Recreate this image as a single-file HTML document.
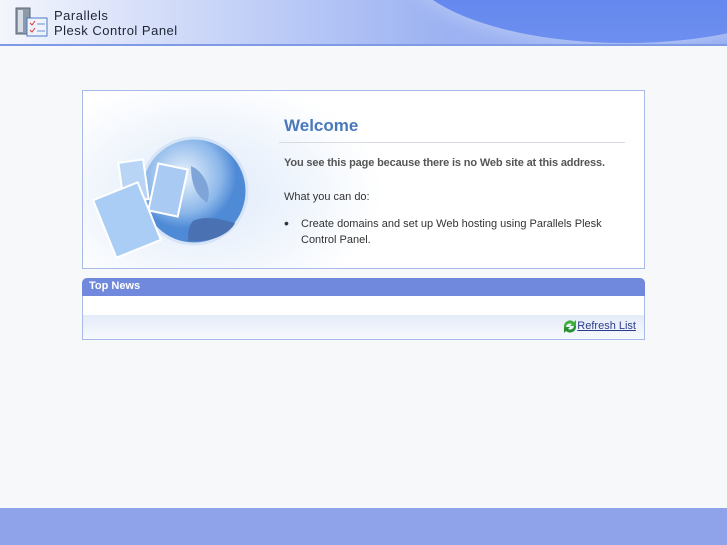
<!DOCTYPE html>
<html><head><style>
body{margin:0;width:727px;height:545px;background:#f7f8fa;font-family:"Liberation Sans",sans-serif;position:relative;overflow:hidden}
#hdr{position:absolute;left:0;top:0;width:727px;height:44px;background:linear-gradient(90deg,#f4f6fc 0%,#c8d4f8 30%,#9db3f2 60%,#8ea7f0 100%);border-bottom:2px solid #7f9be6;overflow:hidden}
#hdr .arc{position:absolute;left:405px;top:-125px;width:440px;height:168px;border-radius:50%;background:linear-gradient(180deg,#4a74e6,#6d8ff0);box-shadow:0 0 18px 4px #b5c6f6}
#logo{position:absolute;left:54px;top:8px;font-size:13px;line-height:15px;color:#1d2433;letter-spacing:0.5px}
#foot{position:absolute;left:0;top:508px;width:727px;height:37px;background:#8fa3ea}
#box{position:absolute;left:82px;top:90px;width:561px;height:177px;border:1px solid #a8bbe6;background:#fff;overflow:hidden}
#box .glow{position:absolute;left:-60px;top:-40px;width:360px;height:260px;background:radial-gradient(ellipse closest-side at 50% 55%,#dfeafa 0%,#eef4fc 50%,rgba(255,255,255,0) 100%)}
h1{position:absolute;left:201px;top:25px;margin:0;font-size:17px;color:#4a78bd}
.hr{position:absolute;left:196px;top:51px;width:346px;height:1px;background:#d7dbe2}
.t{position:absolute;left:201px;font-size:11px;color:#333}
#news{position:absolute;left:82px;top:278px;width:561px;height:61px;border:1px solid #a8bbe6;border-top:none;background:#fff;border-radius:5px 5px 0 0}
#news .bar{height:18px;background:#7189dd;border-radius:5px 5px 0 0;color:#fff;font-weight:bold;font-size:11px;line-height:17px;padding-left:7px;margin:0 -1px}
#news .f{position:absolute;left:0;top:37px;width:561px;height:24px;background:linear-gradient(#e4ebf8,#f7f9fd)}
#news a{position:absolute;right:8px;top:42px;font-size:11px;color:#2b3b8f;text-decoration:underline}
</style></head><body>
<div id="hdr"><div class="arc"></div>
<svg style="position:absolute;left:14px;top:6px" width="36" height="32"><rect x="2" y="2" width="14" height="26" fill="#8c99a8" stroke="#5b6574"/><rect x="4" y="4" width="5" height="22" fill="#d7dde6"/><rect x="13" y="12" width="20" height="18" fill="#eef3fb" stroke="#4c79c8"/><path d="M16 17l2 2 3-4M16 24l2 2 3-4" stroke="#d33" fill="none"/><path d="M23 18h8M23 25h8" stroke="#6a8fd0"/></svg>
<div id="logo">Parallels<br>Plesk Control Panel</div></div>
<div id="box"><div class="glow"></div>
<svg style="position:absolute;left:0;top:30px" width="200" height="147"><defs><radialGradient id="g" cx="40%" cy="35%"><stop offset="0" stop-color="#eaf3fd"/><stop offset="0.7" stop-color="#8db8ea"/><stop offset="1" stop-color="#4f8ad6"/></radialGradient></defs><circle cx="111" cy="70" r="53" fill="url(#g)" stroke="#d5e4f7" stroke-width="3"/><path d="M110 100c12-6 28-2 42 2-6 12-25 20-47 18 0-8 0-14 5-20z" fill="#4a72b3"/><path d="M108 45c12 5 22 22 16 37-6-5-16-12-16-37z" fill="#7fa5d8"/><rect x="38" y="40" width="25" height="40" fill="#b9d5f5" stroke="#fff" stroke-width="2" transform="rotate(-8 50 60)"/><rect x="70" y="45" width="30" height="48" fill="#a9cbf3" stroke="#fff" stroke-width="2" transform="rotate(12 85 69)"/><rect x="20" y="68" width="48" height="62" fill="#aacdf5" stroke="#fff" stroke-width="2" transform="rotate(-22 44 99)"/></svg>
<h1>Welcome</h1><div class="hr"></div>
<div class="t" style="top:66px;font-weight:bold;color:#555;letter-spacing:-0.15px">You see this page because there is no Web site at this address.</div>
<div class="t" style="top:100px">What you can do:</div>
<div class="t" style="top:124px;left:201px;font-size:14px">•</div>
<div class="t" style="top:125px;left:218px;width:320px;line-height:16px">Create domains and set up Web hosting using Parallels Plesk Control Panel.</div>
</div>
<div id="news"><div class="bar">Top News</div><div class="f"></div>
<svg style="position:absolute;right:66px;top:41px" width="16" height="15"><path d="M2 8a6 6 0 0 1 10-5l2-2v6h-6l2-2a4 4 0 0 0-6 3z" fill="#3fae3a"/><path d="M14 7a6 6 0 0 1-10 5l-2 2v-6h6l-2 2a4 4 0 0 0 6-3z" fill="#2c8f2f"/></svg>
<a>Refresh List</a></div>
<div id="foot"></div>
</body></html>
